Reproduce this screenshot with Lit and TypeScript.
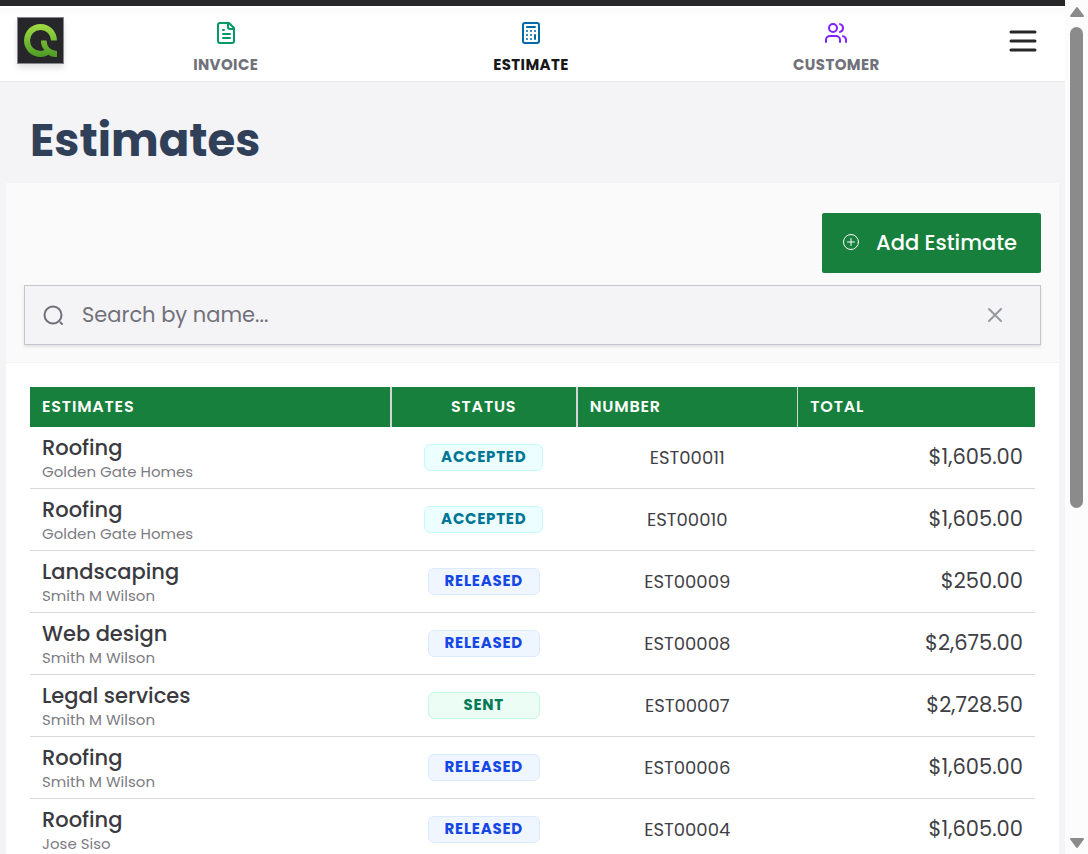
import { LitElement, html, css, svg } from "lit";
import { customElement, state } from "lit/decorators.js";
import { classMap } from "lit/directives/class-map.js";

type Status = "accepted" | "released" | "sent";

interface Estimate {
  title: string;
  customer: string;
  status: Status;
  number: string;
  total: string;
}

const ESTIMATES: Estimate[] = [
  { title: "Roofing", customer: "Golden Gate Homes", status: "accepted", number: "EST00011", total: "$1,605.00" },
  { title: "Roofing", customer: "Golden Gate Homes", status: "accepted", number: "EST00010", total: "$1,605.00" },
  { title: "Landscaping", customer: "Smith M Wilson", status: "released", number: "EST00009", total: "$250.00" },
  { title: "Web design", customer: "Smith M Wilson", status: "released", number: "EST00008", total: "$2,675.00" },
  { title: "Legal services", customer: "Smith M Wilson", status: "sent", number: "EST00007", total: "$2,728.50" },
  { title: "Roofing", customer: "Smith M Wilson", status: "released", number: "EST00006", total: "$1,605.00" },
  { title: "Roofing", customer: "Jose Siso", status: "released", number: "EST00004", total: "$1,605.00" },
];

const invoiceIcon = svg`
  <path d="M15 2H6a2 2 0 0 0-2 2v16a2 2 0 0 0 2 2h12a2 2 0 0 0 2-2V7z"/>
  <path d="M14 2v4a2 2 0 0 0 2 2h4M9 9h1M9 13h7M9 17h7"/>`;

const estimateIcon = svg`
  <rect x="4" y="2" width="16" height="20" rx="2"/>
  <path d="M8 6h8M16 10h.01M12 10h.01M8 10h.01M12 14h.01M8 14h.01M12 18h.01M8 18h.01M16 14v4"/>`;

const customerIcon = svg`
  <path d="M16 21v-2a4 4 0 0 0-4-4H6a4 4 0 0 0-4 4v2"/>
  <circle cx="9" cy="7" r="4"/>
  <path d="M22 21v-2a4 4 0 0 0-3-3.87M16 3.13a4 4 0 0 1 0 7.75"/>`;

const TABS = [
  { id: "invoice", label: "INVOICE", icon: invoiceIcon },
  { id: "estimate", label: "ESTIMATE", icon: estimateIcon },
  { id: "customer", label: "CUSTOMER", icon: customerIcon },
];

@customElement("app-header")
class AppHeader extends LitElement {
  static styles = css`
    :host {
      display: grid;
      grid-template-columns: 73px 1fr 76px;
      border-top: 6px solid #27272a;
      border-bottom: 1px solid #e8e8eb;
      background: linear-gradient(#fff 2px, #f9f9fa 2px, #fff 10px);
      height: 75px;
    }
    .logo {
      display: block;
      margin: 11px 0 0 17px;
      width: 47px;
      height: 47px;
      box-shadow: 0 4px 6px rgba(0, 0, 0, 0.12);
    }
    .logo svg {
      display: block;
      width: 100%;
      height: 100%;
    }
    .tabs {
      display: grid;
      grid-template-columns: repeat(3, 1fr);
    }
    .tab {
      display: flex;
      flex-direction: column;
      align-items: center;
      gap: 10px;
      padding-top: 15px;
      color: #71717a;
      font-size: 15px;
      font-weight: 700;
      letter-spacing: 0.025em;
      line-height: 20px;
      text-decoration: none;
    }
    .tab.active {
      color: #18181b;
    }
    .icon {
      width: 24px;
      height: 24px;
      fill: none;
      stroke-width: 2;
      stroke-linecap: round;
      stroke-linejoin: round;
    }
    .invoice {
      stroke: #009966;
    }
    .estimate {
      stroke: #0069a8;
    }
    .customer {
      stroke: #7f22fe;
    }
    .menu {
      display: flex;
      align-items: center;
      justify-content: center;
      margin: 0;
      padding: 0 9px 6px 0;
      border: 0;
      background: none;
      cursor: pointer;
    }
    .menu svg {
      width: 28px;
      height: 24px;
      stroke: #27272a;
      stroke-width: 3;
      stroke-linecap: round;
    }
  `;

  render() {
    return html`
      <a class="logo" href="#home" aria-label="Home">
        <svg viewBox="0 0 47 47">
          <defs>
            <linearGradient id="leaf" x1="0" y1="0" x2="0" y2="1">
              <stop offset="0" stop-color="#a2dc45" />
              <stop offset="1" stop-color="#4c9a26" />
            </linearGradient>
          </defs>
          <rect x="0.5" y="0.5" width="46" height="46" fill="#27272a" stroke="#85858c" />
          <path
            fill="url(#leaf)"
            d="M40 23.500A16.500 16.500 0 1 0 23.500 40Q28 40 31.500 37.800Q34 40 38 40H40V34Q30 33.500 29.500 23.500H24Q24 30 27.500 33Q25.500 34 23.500 34A10.500 10.500 0 1 1 34 23.500Z"
          />
        </svg>
      </a>
      <nav class="tabs">
        ${TABS.map(
          (t) => html`
            <a class=${classMap({ tab: true, active: t.id === "estimate" })} href="#${t.id}">
              <svg class="icon ${t.id}" viewBox="0 0 24 24" aria-hidden="true">${t.icon}</svg>
              <span>${t.label}</span>
            </a>
          `
        )}
      </nav>
      <button class="menu" aria-label="Menu">
        <svg viewBox="0 0 28 24"><path d="M2 3h24M2 12h24M2 21h24" /></svg>
      </button>
    `;
  }
}

@customElement("estimate-table")
class EstimateTable extends LitElement {
  static properties = { rows: { attribute: false } };
  declare rows: Estimate[];

  static styles = css`
    :host {
      display: block;
    }
    .table {
      width: 100%;
      table-layout: fixed;
      border-collapse: collapse;
      color: #3f3f46;
    }
    .table th {
      box-sizing: border-box;
      height: 40px;
      padding: 0 12px;
      background: #16803c;
      color: #fff;
      font-size: 16px;
      font-weight: 600;
      letter-spacing: 0.05em;
      line-height: 24px;
      text-align: left;
    }
    .table th + th {
      border-left: 2px solid #d4d4d8;
    }
    .table th:last-child {
      border-left-width: 1px;
    }
    .table td {
      height: 61px;
      padding: 0 12px;
      border-bottom: 1px solid #d8d8db;
    }
    .col-name {
      width: 35.9%;
    }
    .col-status {
      width: 18.5%;
    }
    .col-number {
      width: 22%;
    }
    .table .status,
    .table .number {
      text-align: center;
    }
    .title {
      color: #3a3a40;
      font-size: 21px;
      font-weight: 500;
      line-height: 28px;
    }
    .customer {
      color: #7c7c83;
      font-size: 15px;
      line-height: 20px;
    }
    .number {
      font-size: 18px;
    }
    .table .total {
      height: 59px;
      padding-bottom: 2px;
      font-size: 21px;
      text-align: right;
    }
    .badge {
      display: inline-block;
      box-sizing: border-box;
      min-width: 112px;
      padding: 0 16px 1px;
      border: 1px solid;
      border-radius: 6px;
      font-size: 15px;
      font-weight: 700;
      letter-spacing: 0.05em;
      line-height: 24px;
      text-transform: uppercase;
    }
    .accepted {
      border-color: #c5f8fe;
      background: #ecfeff;
      color: #007595;
    }
    .released {
      border-color: #dbeafe;
      background: #eff6ff;
      color: #1447e6;
    }
    .sent {
      border-color: #c8f7df;
      background: #ecfdf5;
      color: #007a55;
    }
  `;

  render() {
    return html`
      <table class="table">
        <thead>
          <tr>
            <th class="col-name" scope="col">ESTIMATES</th>
            <th class="col-status status" scope="col">STATUS</th>
            <th class="col-number" scope="col">NUMBER</th>
            <th scope="col">TOTAL</th>
          </tr>
        </thead>
        <tbody>
          ${this.rows.map(
            (r) => html`
              <tr>
                <td>
                  <div class="title">${r.title}</div>
                  <div class="customer">${r.customer}</div>
                </td>
                <td class="status"><span class="badge ${r.status}">${r.status}</span></td>
                <td class="number">${r.number}</td>
                <td class="total">${r.total}</td>
              </tr>
            `
          )}
        </tbody>
      </table>
    `;
  }
}

@customElement("app-root")
class AppRoot extends LitElement {
  @state() private query = "";

  static styles = css`
    :host {
      display: grid;
      grid-template-columns: 1fr 23px;
      height: 100vh;
      overflow: hidden;
      background: #f4f4f7;
      font-family: Poppins, Inter, sans-serif;
    }
    .page {
      min-width: 0;
      overflow-y: auto;
      scrollbar-width: none;
    }
    .heading {
      margin: 0;
      padding: 30px 30px 13px;
      color: #2f4058;
      font-size: 45px;
      font-weight: 700;
      line-height: 58px;
    }
    .card {
      margin: 0 6px;
      background: #fff;
    }
    .toolbar {
      display: flex;
      flex-direction: column;
      gap: 12px;
      padding: 30px 18px 17px;
      border-bottom: 1px solid #f4f4f5;
      background: #fafafa;
    }
    .add {
      display: flex;
      align-items: center;
      align-self: flex-end;
      gap: 16px;
      height: 60px;
      margin: 0;
      padding: 0 24px 2px 20px;
      border: 0;
      border-radius: 2px;
      background: #16803c;
      color: #fff;
      font: inherit;
      font-size: 21px;
      font-weight: 500;
      cursor: pointer;
    }
    .add svg {
      width: 18px;
      height: 18px;
      fill: none;
      stroke: #fff;
      stroke-linecap: round;
    }
    .search {
      display: flex;
      align-items: center;
      box-sizing: border-box;
      height: 60px;
      padding: 0 34px 0 18px;
      border: 1px solid #c5c5cd;
      background: #f4f4f7;
      box-shadow: 0 2px 3px rgba(0, 0, 0, 0.1);
    }
    .search svg {
      display: block;
      width: 22px;
      height: 22px;
      fill: none;
      stroke: #71717a;
      stroke-width: 2;
      stroke-linecap: round;
    }
    .field {
      flex: 1;
      min-width: 0;
      margin: 0;
      padding: 0 17px 1px;
      border: 0;
      outline: 0;
      background: none;
      color: #3f3f46;
      font: inherit;
      font-size: 21px;
    }
    .field::placeholder {
      color: #71717a;
      opacity: 1;
    }
    .clear {
      margin: 0;
      padding: 0;
      border: 0;
      background: none;
      cursor: pointer;
    }
    .search .clear svg {
      stroke: #9797a0;
    }
    .list {
      padding: 24px;
    }
    .rail {
      display: flex;
      flex-direction: column;
      align-items: center;
      gap: 9px;
      padding: 6px 0 5px;
      box-sizing: border-box;
      background: #fcfcfc;
    }
    .arrow {
      flex: none;
      width: 16px;
      height: 12px;
      fill: #8b8b8b;
      stroke: #8b8b8b;
      stroke-width: 2;
      stroke-linejoin: round;
    }
    .track {
      flex: 1;
    }
    .thumb {
      width: 13px;
      height: 60%;
      border-radius: 7px;
      background: #8b8b8b;
    }
  `;

  private onInput(e: Event) {
    this.query = (e.target as HTMLInputElement).value;
  }

  render() {
    const q = this.query.trim().toLowerCase();
    const rows = ESTIMATES.filter((r) => `${r.title} ${r.customer}`.toLowerCase().includes(q));
    return html`
      <div class="page">
        <app-header></app-header>
        <main>
          <h1 class="heading">Estimates</h1>
          <section class="card">
            <div class="toolbar">
              <button class="add">
                <svg viewBox="0 0 18 18" aria-hidden="true">
                  <circle cx="9" cy="9" r="7.500" />
                  <path d="M9 5.500v7M5.500 9h7" />
                </svg>
                Add Estimate
              </button>
              <div class="search">
                <svg viewBox="0 0 22 22" aria-hidden="true">
                  <circle cx="10" cy="11" r="8.500" />
                  <path d="M17.500 18.500l1.500 1.500" />
                </svg>
                <input
                  class="field"
                  type="text"
                  aria-label="Search by name"
                  placeholder="Search by name..."
                  .value=${this.query}
                  @input=${this.onInput}
                />
                <button class="clear" aria-label="Clear search" @click=${() => (this.query = "")}>
                  <svg viewBox="0 0 22 22"><path d="M5 5l12 12M17 5L5 17" /></svg>
                </button>
              </div>
            </div>
            <div class="list">
              <estimate-table .rows=${rows}></estimate-table>
            </div>
          </section>
        </main>
      </div>
      <div class="rail" aria-hidden="true">
        <svg class="arrow" viewBox="0 0 16 12"><path d="M8 2l6 8H2z" /></svg>
        <div class="track"><div class="thumb"></div></div>
        <svg class="arrow" viewBox="0 0 16 12"><path d="M8 10l6-8H2z" /></svg>
      </div>
    `;
  }
}
